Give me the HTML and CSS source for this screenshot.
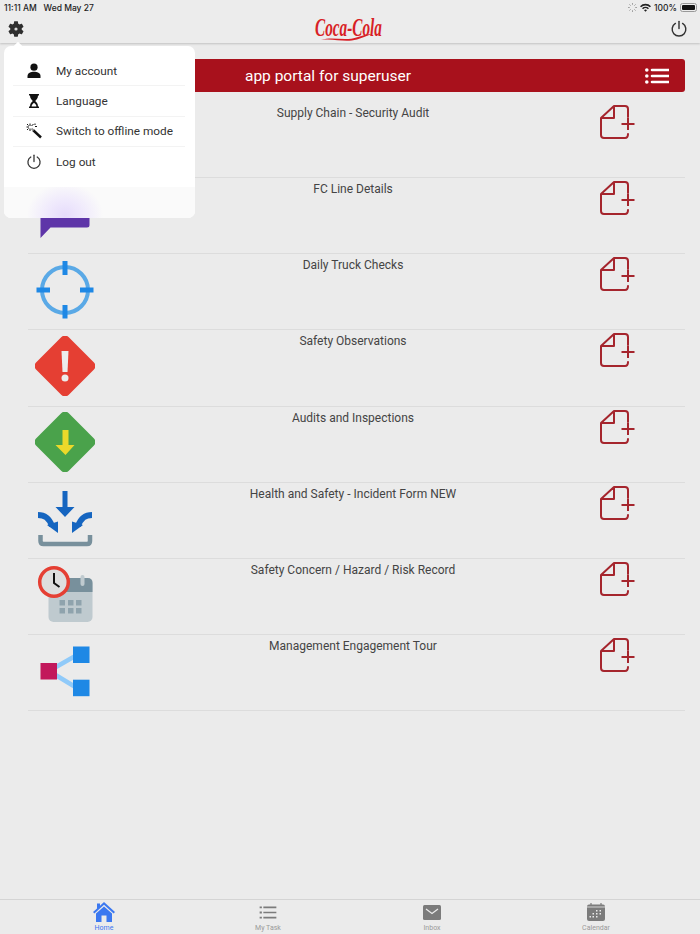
FILE: index.html
```html
<!DOCTYPE html>
<html lang="en">
<head>
    <meta charset="UTF-8">
    <meta name="viewport" content="width=device-width, initial-scale=1.0">
    <title>App Portal</title>
    <link rel="stylesheet" href="styles.css">
</head>
<body>

<svg class="defs" width="0" height="0">
    <symbol id="doc" viewBox="0 0 40 40">
        <path d="M3 15 L16 3 H27 Q30 3 30 6 V14 M30 31 Q30 35 27 35 H6 Q3 35 3 32 V15 H16 V3" fill="none" stroke="#a5252d" stroke-width="2" stroke-linejoin="round" stroke-linecap="round"/>
        <path d="M23.5 21 H36.5 M30 15 V27" fill="none" stroke="#a5252d" stroke-width="2"/>
    </symbol>
    <symbol id="power" viewBox="0 0 20 20">
        <path d="M6 3.8 A7.6 7.6 0 1 0 14 3.8" fill="none" stroke="currentColor" stroke-width="1.6" stroke-linecap="round"/>
        <path d="M10 1.5 V9.5" fill="none" stroke="currentColor" stroke-width="1.6" stroke-linecap="round"/>
    </symbol>
</svg>

<header>
    <div class="status-bar">
        <span>11:11 AM &nbsp;&nbsp;Wed May 27</span>
        <div class="status-right">
            <svg width="9" height="9" viewBox="0 0 10 10"><path d="M5 0 V2 M5 8 V10 M0 5 H2 M8 5 H10 M1.5 1.5 L3 3 M7 7 L8.5 8.5 M1.5 8.5 L3 7 M7 3 L8.5 1.5" stroke="#999" stroke-width="1"/></svg>
            <svg width="11" height="9" viewBox="0 0 12 9"><path d="M0 3 A8.5 8.5 0 0 1 12 3 L10.8 4.2 A6.8 6.8 0 0 0 1.2 4.2 Z M2.2 5.2 A5.4 5.4 0 0 1 9.8 5.2 L8.6 6.4 A3.7 3.7 0 0 0 3.4 6.4 Z M4.4 7.4 A2.3 2.3 0 0 1 7.6 7.4 L6 9 Z" fill="#222"/></svg>
            <span>100%</span>
            <span class="battery"><span class="battery-fill"></span></span>
        </div>
    </div>
    <div class="nav-bar">
        <svg class="gear" width="16" height="16" viewBox="2 2 20 20">
            <path d="M19.14 12.94c.04-.3.06-.61.06-.94 0-.32-.02-.64-.07-.94l2.03-1.58c.18-.14.23-.41.12-.61l-1.92-3.32c-.12-.22-.37-.29-.59-.22l-2.39.96c-.5-.38-1.03-.7-1.62-.94l-.36-2.54c-.04-.24-.24-.41-.48-.41h-3.84c-.24 0-.43.17-.47.41l-.36 2.54c-.59.24-1.13.57-1.62.94l-2.39-.96c-.22-.08-.47 0-.59.22L2.74 8.87c-.12.21-.08.47.12.61l2.03 1.58c-.05.3-.09.63-.09.94s.02.64.07.94l-2.03 1.58c-.18.14-.23.41-.12.61l1.92 3.32c.12.22.37.29.59.22l2.39-.96c.5.38 1.03.7 1.62.94l.36 2.54c.05.24.24.41.48.41h3.84c.24 0 .44-.17.47-.41l.36-2.54c.59-.24 1.13-.56 1.62-.94l2.39.96c.22.08.47 0 .59-.22l1.92-3.32c.12-.22.07-.47-.12-.61l-2.01-1.58z" fill="#2e2e2e"/>
            <circle cx="12" cy="12" r="2" fill="#d8d8d8"/>
        </svg>
        <svg class="logo" width="70" height="28" viewBox="0 0 70 28">
            <text transform="translate(1 21) scale(0.61 1)" class="logo-text">Coca-Cola</text>
            <path d="M7 25 C20 21 30 27 44 22 C50 20 54 19 58 19 C52 21 48 23 43 24.5 C30 28 20 23 7 25 Z" fill="#d81f26"/>
        </svg>
        <svg class="nav-power" width="18" height="18"><use href="#power"/></svg>
    </div>
</header>

<main>
    <div class="banner">
        <h1>app portal for superuser</h1>
        <svg width="24" height="16" viewBox="0 0 24 16">
            <path d="M7 2 H24 M7 8 H24 M7 14 H24" stroke="#fff" stroke-width="2.6" stroke-linecap="round"/>
            <circle cx="1.8" cy="2" r="1.8" fill="#fff"/>
            <circle cx="1.8" cy="8" r="1.8" fill="#fff"/>
            <circle cx="1.8" cy="14" r="1.8" fill="#fff"/>
        </svg>
    </div>

    <ul class="form-list">
        <li class="form-row">
            <span class="row-icon"></span>
            <span class="row-title">Supply Chain - Security Audit</span>
            <svg class="row-add" width="40" height="40"><use href="#doc"/></svg>
        </li>
        <li class="form-row">
            <svg class="row-icon" width="60" height="60" viewBox="0 0 60 60">
                <path d="M5.5 8 H54.5 V41 Q54.5 43.5 52 43.5 H15.5 L5.5 54 Z" fill="#5e35a8"/>
            </svg>
            <span class="row-title">FC Line Details</span>
            <svg class="row-add" width="40" height="40"><use href="#doc"/></svg>
        </li>
        <li class="form-row">
            <svg class="row-icon" width="60" height="60" viewBox="0 0 60 60">
                <circle cx="30" cy="30" r="23" fill="none" stroke="#5aa9e6" stroke-width="4"/>
                <path d="M1.5 30 H15 M45 30 H58.5 M30 1 V15 M30 45 V58.5" stroke="#1e88e5" stroke-width="5"/>
            </svg>
            <span class="row-title">Daily Truck Checks</span>
            <svg class="row-add" width="40" height="40"><use href="#doc"/></svg>
        </li>
        <li class="form-row">
            <svg class="row-icon" width="60" height="60" viewBox="0 0 60 60">
                <rect x="7" y="7" width="46" height="46" rx="5" transform="rotate(45 30 30)" fill="#e53f33"/>
                <path d="M26.5 15 H33.5 L32.5 36 H27.5 Z" fill="#ececec"/>
                <circle cx="30" cy="42" r="3.5" fill="#ececec"/>
            </svg>
            <span class="row-title">Safety Observations</span>
            <svg class="row-add" width="40" height="40"><use href="#doc"/></svg>
        </li>
        <li class="form-row">
            <svg class="row-icon" width="60" height="60" viewBox="0 0 60 60">
                <rect x="7" y="7" width="46" height="46" rx="5" transform="rotate(45 30 30)" fill="#4aa24b"/>
                <path d="M27.5 18 H33.5 V33 H39.5 L30.5 43 L20.5 33 H27.5 Z" fill="#ecd92a"/>
            </svg>
            <span class="row-title">Audits and Inspections</span>
            <svg class="row-add" width="40" height="40"><use href="#doc"/></svg>
        </li>
        <li class="form-row">
            <svg class="row-icon" width="60" height="60" viewBox="0 0 60 60">
                <path d="M27.5 3 H32.5 V19 H39.5 L30 29 L20.5 19 H27.5 Z" fill="#1565c0"/>
                <path d="M3 27 C10 27 14 30 17 38 M57 27 C50 27 46 30 43 38" fill="none" stroke="#1565c0" stroke-width="6"/>
                <path d="M12 37 L23 33.5 L23 45 Z M48 37 L37 33.5 L37 45 Z" fill="#1565c0"/>
                <path d="M5.5 47 V53 Q5.5 56 8.5 56 H52 Q55 56 55 53 V47" fill="none" stroke="#78909c" stroke-width="4.5"/>
            </svg>
            <span class="row-title">Health and Safety - Incident Form NEW</span>
            <svg class="row-add" width="40" height="40"><use href="#doc"/></svg>
        </li>
        <li class="form-row">
            <svg class="row-icon" width="60" height="60" viewBox="0 0 60 60">
                <rect x="13.5" y="14" width="44" height="44" rx="5" fill="#bfcacf"/>
                <path d="M13.5 28 V19 Q13.5 14 18.5 14 H52.5 Q57.5 14 57.5 19 V28 Z" fill="#78909c"/>
                <rect x="45.5" y="11" width="4" height="11" rx="2" fill="#bfcacf"/>
                <path d="M24.5 36 h5.5 v5.5 h-5.5 Z M33 36 h5.5 v5.5 h-5.5 Z M41 36 h5.5 v5.5 h-5.5 Z M24.5 44 h5.5 v5.5 h-5.5 Z M33 44 h5.5 v5.5 h-5.5 Z M41 44 h5.5 v5.5 h-5.5 Z" fill="#8fa3ad"/>
                <circle cx="19" cy="18" r="14.3" fill="#dedede" stroke="#e53f33" stroke-width="3.5"/>
                <path d="M19 9 V19 L24.5 23" fill="none" stroke="#111" stroke-width="2"/>
            </svg>
            <span class="row-title">Safety Concern / Hazard / Risk Record</span>
            <svg class="row-add" width="40" height="40"><use href="#doc"/></svg>
        </li>
        <li class="form-row">
            <svg class="row-icon" width="60" height="60" viewBox="0 0 60 60">
                <path d="M14 30 L42 14 M14 30 L42 47" stroke="#90caf9" stroke-width="4.5"/>
                <rect x="5.5" y="22" width="16.5" height="16.5" fill="#c2185b"/>
                <rect x="38" y="5.5" width="16.5" height="16.5" fill="#1e88e5"/>
                <rect x="38" y="38.7" width="16.5" height="16.5" fill="#1e88e5"/>
            </svg>
            <span class="row-title">Management Engagement Tour</span>
            <svg class="row-add" width="40" height="40"><use href="#doc"/></svg>
        </li>
    </ul>
</main>

<nav class="tab-bar">
    <div class="tab tab-active">
        <svg width="22" height="20" viewBox="0 0 22 20"><path d="M11 0 L22 10 L20.6 11.4 L11 2.8 L1.4 11.4 L0 10 L4 6.4 V1.5 H7 V3.7 Z" fill="#3b78f0"/><path d="M11 4.5 L19 11.6 V20 H13.5 V13.5 H8.5 V20 H3 V11.6 Z" fill="#3b78f0"/></svg>
        <span>Home</span>
    </div>
    <div class="tab">
        <svg width="18" height="13" viewBox="0 0 18 14"><path d="M4 1.5 H18 M4 7 H18 M4 12.5 H18" stroke="#7b7b7b" stroke-width="1.8"/><path d="M0 0.5 H2.4 V2.5 H0 Z M0 6 H2.4 V8 H0 Z M0 11.5 H2.4 V13.5 H0 Z" fill="#7b7b7b"/></svg>
        <span>My Task</span>
    </div>
    <div class="tab">
        <svg width="18" height="15" viewBox="0 0 18 15"><rect width="18" height="15" rx="1.5" fill="#7b7b7b"/><path d="M3 4 L9 8.5 L15 4" fill="none" stroke="#ebebeb" stroke-width="1.2"/></svg>
        <span>Inbox</span>
    </div>
    <div class="tab">
        <svg width="18" height="18" viewBox="0 0 18 18"><rect y="1.5" width="18" height="16.5" rx="2" fill="#7b7b7b"/><path d="M0 4 H18" stroke="#ebebeb" stroke-width="0.8"/><path d="M4 0 V2 M14 0 V2" stroke="#7b7b7b" stroke-width="1.2"/><path d="M9 7 h1.5 v1.5 h-1.5 Z M12.5 7 h1.5 v1.5 h-1.5 Z M5.5 10 h1.5 v1.5 h-1.5 Z M9 10 h1.5 v1.5 h-1.5 Z M12.5 10 h1.5 v1.5 h-1.5 Z M2.5 13 h1.5 v1.5 h-1.5 Z M5.5 13 h1.5 v1.5 h-1.5 Z M9 13 h1.5 v1.5 h-1.5 Z" fill="#ebebeb"/></svg>
        <span>Calendar</span>
    </div>
</nav>

<!-- settings popover, lies over the list -->
<div class="popover">
    <ul class="popover-list">
        <li>
            <svg width="16" height="16" viewBox="0 0 16 16"><circle cx="8" cy="4.2" r="3.6" fill="#111"/><path d="M1.5 15 V13 C1.5 10 5 8.8 8 8.8 C11 8.8 14.5 10 14.5 13 V15 Z" fill="#111"/></svg>
            My account
        </li>
        <li>
            <svg width="16" height="16" viewBox="0 0 16 16"><path d="M3 1 H13 V2.6 H12 C12 5.5 10.4 6.8 9.2 8 C10.4 9.2 12 10.5 12 13.4 H13 V15 H3 V13.4 H4 C4 10.5 5.6 9.2 6.8 8 C5.6 6.8 4 5.5 4 2.6 H3 Z" fill="#111"/><path d="M5.6 13.4 C5.6 11.8 7 10.6 8 9.8 C9 10.6 10.4 11.8 10.4 13.4 Z" fill="#fff"/></svg>
            Language
        </li>
        <li>
            <svg width="16" height="16" viewBox="0 0 16 16"><path d="M7 7 L15 14.5" stroke="#111" stroke-width="2.4"/><path d="M5.5 5.5 L7.5 7.5" stroke="#999" stroke-width="2"/><path d="M4 0.5 V3 M4 5.5 V8 M0.5 4 H3 M5.5 3 L7.5 1 M1 1 L2.5 2.5 M1 7 L2.5 5.5 M9 3.5 H11 M9 0.5 V2" stroke="#111" stroke-width="1"/></svg>
            Switch to offline mode
        </li>
        <li>
            <svg width="16" height="16"><use href="#power"/></svg>
            Log out
        </li>
    </ul>
    <div class="popover-foot"></div>
</div>

</body>
</html>
```

FILE: styles.css
```css
* {
    box-sizing: border-box;
}
body {
    font-family: Roboto, "Liberation Sans", sans-serif;
    margin: 0;
    width: 700px;
    height: 934px;
    position: relative;
    display: flex;
    flex-direction: column;
    overflow: hidden;
    background-color: #ebebeb;
    color: #444;
}
.defs {
    position: absolute;
}

/* top bars */
header {
    height: 43px;
    background-color: #ececec;
    box-shadow: 0 1px 2px rgba(0, 0, 0, 0.18);
}
.status-bar {
    height: 15px;
    padding: 0 3px 0 4px;
    display: flex;
    align-items: center;
    justify-content: space-between;
    font-family: Inter, sans-serif;
    font-size: 8.5px;
    font-weight: 500;
    color: #222;
}
.status-right {
    display: flex;
    align-items: center;
    gap: 3px;
}
.battery {
    width: 17px;
    height: 9px;
    padding: 1px;
    border: 1px solid #999;
    border-radius: 2.5px;
    display: block;
}
.battery-fill {
    display: block;
    height: 100%;
    background-color: #111;
    border-radius: 1px;
}
.nav-bar {
    height: 28px;
    padding: 0 12px 0 8px;
    display: flex;
    align-items: center;
    justify-content: space-between;
}
.logo {
    margin-left: 3px;
}
.logo-text {
    font-family: "Liberation Serif", serif;
    font-style: italic;
    font-weight: 700;
    font-size: 25px;
    fill: #d81f26;
}
.nav-power {
    color: #333;
}

/* main list */
main {
    flex: 1;
    padding: 16px 15px 0 15px;
}
.banner {
    height: 33px;
    padding-right: 16px;
    display: flex;
    align-items: center;
    gap: 4px;
    background-color: #a8111c;
    border-radius: 3px;
    color: white;
}
.banner h1 {
    flex: 1;
    margin: 0;
    font-size: 15.5px;
    font-weight: 400;
    text-align: center;
}
.form-list {
    list-style: none;
    margin: 10px 0 0 13px;
    padding: 0;
}
.form-row {
    height: 76.15px;
    display: grid;
    grid-template-columns: 80px 1fr 87px;
    border-bottom: 1px solid #dcdcdc;
}
.row-icon {
    margin: 5.6px 0 0 6.5px;
}
.row-title {
    padding-top: 4px;
    font-size: 12px;
    line-height: 15px;
    text-align: center;
}
.row-add {
    margin-top: 1px;
}

/* bottom tabs */
.tab-bar {
    height: 35px;
    padding: 0 22px;
    display: grid;
    grid-template-columns: repeat(4, 1fr);
    border-top: 1px solid #d4d4d4;
}
.tab {
    height: 100%;
    padding-top: 2px;
    display: grid;
    grid-template-rows: 20px 1fr;
    justify-items: center;
    align-items: center;
    font-size: 7px;
    color: #9a9a9a;
}
.tab-active {
    color: #3b78f0;
}

/* settings popover */
.popover {
    position: absolute;
    left: 4px;
    top: 46px;
    width: 191px;
    height: 172px;
    display: flex;
    flex-direction: column;
    background: white;
    border-radius: 7px;
}
.popover::before {
    content: "";
    position: absolute;
    left: 11px;
    top: -3px;
    width: 6px;
    height: 6px;
    background: white;
    transform: rotate(45deg);
}
.popover-list {
    list-style: none;
    margin: 0;
    padding: 10px 10px 0 9px;
}
.popover-list li {
    height: 30.3px;
    padding-left: 13px;
    display: flex;
    align-items: center;
    gap: 14px;
    font-size: 11.8px;
    color: #333;
    border-bottom: 1px solid #f3f3f3;
}
.popover-list li:last-child {
    border-bottom: none;
}
.popover-foot {
    margin-top: auto;
    height: 31px;
    border-radius: 0 0 7px 7px;
    background: radial-gradient(ellipse 38px 32px at 61px 28px, #e6dcfb 0%, #efe9fc 45%, rgba(250, 250, 250, 0) 100%), #fafafa;
}
```
